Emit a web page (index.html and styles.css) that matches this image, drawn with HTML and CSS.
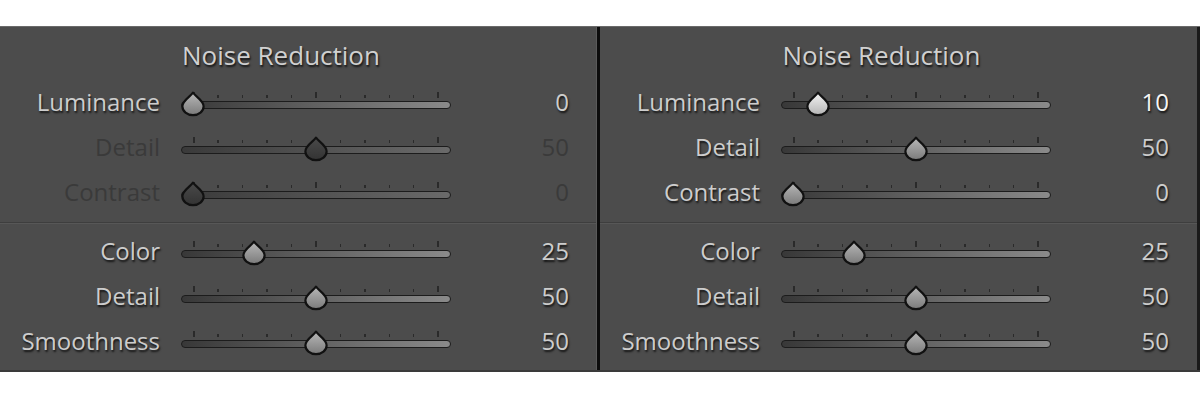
FILE: index.html
```html
<!DOCTYPE html>
<html>
    <head>
        <meta charset="UTF-8">
        <title>Noise Reduction</title>
        <link rel="stylesheet" href="styles.css">
    </head>
    <body>
        <!-- shared thumb shape and fills -->
        <svg class="defs" width="0" height="0">
            <defs>
                <linearGradient id="fillNormal" x1="0" y1="0" x2="0" y2="1">
                    <stop offset="0" stop-color="#b8b8b8"/>
                    <stop offset="1" stop-color="#7a7a7a"/>
                </linearGradient>
                <linearGradient id="fillBright" x1="0" y1="0" x2="0" y2="1">
                    <stop offset="0" stop-color="#f4f4f4"/>
                    <stop offset="1" stop-color="#b4b4b4"/>
                </linearGradient>
                <linearGradient id="fillDim" x1="0" y1="0" x2="0" y2="1">
                    <stop offset="0" stop-color="#4a4a4a"/>
                    <stop offset="1" stop-color="#333333"/>
                </linearGradient>
                <symbol id="drop" viewBox="0 0 26 26">
                    <path d="M13 1.6 C14.8 5 23.6 9.4 23.6 15.4 A10.6 8.8 0 0 1 2.4 15.4 C2.4 9.4 11.2 5 13 1.6 Z"
                          stroke="#111" stroke-width="2.2" stroke-linejoin="round"/>
                </symbol>
            </defs>
        </svg>

        <div class="panels">
            <!-- before -->
            <section class="panel">
                <h2 class="title">Noise Reduction</h2>
                <div class="group">
                    <div class="row">
                        <span class="label">Luminance</span>
                        <div class="slider" style="--v: 0">
                            <div class="ticks"><i class="long"></i><i></i><i></i><i></i><i></i><i class="long"></i><i></i><i></i><i></i><i></i><i class="long"></i></div>
                            <div class="track"></div>
                            <svg class="thumb"><use href="#drop"/></svg>
                        </div>
                        <span class="value">0</span>
                    </div>
                    <div class="row off">
                        <span class="label">Detail</span>
                        <div class="slider" style="--v: 50">
                            <div class="ticks"><i class="long"></i><i></i><i></i><i></i><i></i><i class="long"></i><i></i><i></i><i></i><i></i><i class="long"></i></div>
                            <div class="track"></div>
                            <svg class="thumb"><use href="#drop"/></svg>
                        </div>
                        <span class="value">50</span>
                    </div>
                    <div class="row off">
                        <span class="label">Contrast</span>
                        <div class="slider" style="--v: 0">
                            <div class="ticks"><i class="long"></i><i></i><i></i><i></i><i></i><i class="long"></i><i></i><i></i><i></i><i></i><i class="long"></i></div>
                            <div class="track"></div>
                            <svg class="thumb"><use href="#drop"/></svg>
                        </div>
                        <span class="value">0</span>
                    </div>
                </div>
                <div class="group">
                    <div class="row">
                        <span class="label">Color</span>
                        <div class="slider" style="--v: 25">
                            <div class="ticks"><i class="long"></i><i></i><i></i><i></i><i></i><i class="long"></i><i></i><i></i><i></i><i></i><i class="long"></i></div>
                            <div class="track"></div>
                            <svg class="thumb"><use href="#drop"/></svg>
                        </div>
                        <span class="value">25</span>
                    </div>
                    <div class="row">
                        <span class="label">Detail</span>
                        <div class="slider" style="--v: 50">
                            <div class="ticks"><i class="long"></i><i></i><i></i><i></i><i></i><i class="long"></i><i></i><i></i><i></i><i></i><i class="long"></i></div>
                            <div class="track"></div>
                            <svg class="thumb"><use href="#drop"/></svg>
                        </div>
                        <span class="value">50</span>
                    </div>
                    <div class="row">
                        <span class="label">Smoothness</span>
                        <div class="slider" style="--v: 50">
                            <div class="ticks"><i class="long"></i><i></i><i></i><i></i><i></i><i class="long"></i><i></i><i></i><i></i><i></i><i class="long"></i></div>
                            <div class="track"></div>
                            <svg class="thumb"><use href="#drop"/></svg>
                        </div>
                        <span class="value">50</span>
                    </div>
                </div>
            </section>

            <div class="divider"></div>

            <!-- after -->
            <section class="panel">
                <h2 class="title">Noise Reduction</h2>
                <div class="group">
                    <div class="row active">
                        <span class="label">Luminance</span>
                        <div class="slider" style="--v: 10">
                            <div class="ticks"><i class="long"></i><i></i><i></i><i></i><i></i><i class="long"></i><i></i><i></i><i></i><i></i><i class="long"></i></div>
                            <div class="track"></div>
                            <svg class="thumb"><use href="#drop"/></svg>
                        </div>
                        <span class="value">10</span>
                    </div>
                    <div class="row">
                        <span class="label">Detail</span>
                        <div class="slider" style="--v: 50">
                            <div class="ticks"><i class="long"></i><i></i><i></i><i></i><i></i><i class="long"></i><i></i><i></i><i></i><i></i><i class="long"></i></div>
                            <div class="track"></div>
                            <svg class="thumb"><use href="#drop"/></svg>
                        </div>
                        <span class="value">50</span>
                    </div>
                    <div class="row">
                        <span class="label">Contrast</span>
                        <div class="slider" style="--v: 0">
                            <div class="ticks"><i class="long"></i><i></i><i></i><i></i><i></i><i class="long"></i><i></i><i></i><i></i><i></i><i class="long"></i></div>
                            <div class="track"></div>
                            <svg class="thumb"><use href="#drop"/></svg>
                        </div>
                        <span class="value">0</span>
                    </div>
                </div>
                <div class="group">
                    <div class="row">
                        <span class="label">Color</span>
                        <div class="slider" style="--v: 25">
                            <div class="ticks"><i class="long"></i><i></i><i></i><i></i><i></i><i class="long"></i><i></i><i></i><i></i><i></i><i class="long"></i></div>
                            <div class="track"></div>
                            <svg class="thumb"><use href="#drop"/></svg>
                        </div>
                        <span class="value">25</span>
                    </div>
                    <div class="row">
                        <span class="label">Detail</span>
                        <div class="slider" style="--v: 50">
                            <div class="ticks"><i class="long"></i><i></i><i></i><i></i><i></i><i class="long"></i><i></i><i></i><i></i><i></i><i class="long"></i></div>
                            <div class="track"></div>
                            <svg class="thumb"><use href="#drop"/></svg>
                        </div>
                        <span class="value">50</span>
                    </div>
                    <div class="row">
                        <span class="label">Smoothness</span>
                        <div class="slider" style="--v: 50">
                            <div class="ticks"><i class="long"></i><i></i><i></i><i></i><i></i><i class="long"></i><i></i><i></i><i></i><i></i><i class="long"></i></div>
                            <div class="track"></div>
                            <svg class="thumb"><use href="#drop"/></svg>
                        </div>
                        <span class="value">50</span>
                    </div>
                </div>
            </section>
        </div>
    </body>
</html>
```

FILE: styles.css
```css
html {
    width: 100%;
    height: 100%;
}

body {
    margin: 0;
    background: #ffffff;
    font-family: "Open Sans", "Noto Sans", sans-serif;
}

.defs {
    position: absolute;
    width: 0;
    height: 0;
}

.panels {
    margin-top: 26px;
    display: flex;
    height: 346px;
    border-top: 1px solid #6a6a6a;
    border-bottom: 2px solid #3a3a3a;
    box-sizing: border-box;
    background: #4c4c4c;
}

.panel {
    width: 596px;
    display: flex;
    flex-direction: column;
}

.panel:first-child {
    border-right: 1px solid #5a5a5a;
}

.panel:last-child {
    width: 597px;
    border-right: 3px solid #1a1a1a;
}

.divider {
    width: 3px;
    background: #0c0c0c;
}

.title {
    margin: 0;
    height: 50px;
    padding-top: 3px;
    padding-right: 34px;
    line-height: 50px;
    text-align: center;
    font-size: 26px;
    font-weight: normal;
    color: #d0d0d0;
    text-shadow: 1px 2px 2px rgba(0, 0, 0, 0.75);
}

.group {
    padding: 0 0 7px;
}

.group + .group {
    border-top: 1px solid #3e3e3e;
    box-shadow: inset 0 1px 0 #575757;
    padding: 6px 0 5px;
}

.row {
    display: grid;
    grid-template-columns: 160px 270px 97px;
    column-gap: 21px;
    align-items: center;
    height: 45px;
    font-size: 24px;
    color: #cdcdcd;
    text-shadow: 1px 2px 2px rgba(0, 0, 0, 0.75);
}

.label,
.value {
    text-align: right;
    line-height: 43px;
    padding-bottom: 2px;
}

.row.off {
    color: #3a3a3a;
    text-shadow: none;
}

.row.active .value {
    color: #f6f6f6;
}

/* slider: tick row above a pill track, thumb laid over both */
.slider {
    position: relative;
    display: flex;
    flex-direction: column;
    gap: 3px;
    margin-bottom: 4px;
}

.ticks {
    display: flex;
    justify-content: space-between;
    align-items: flex-end;
    height: 6px;
    margin-left: 12px;
    width: 246px;
}

.ticks i {
    display: block;
    width: 1.5px;
    height: 3px;
    background: #2a2a2a;
}

.ticks i.long {
    height: 6px;
}

.track {
    height: 8px;
    box-sizing: border-box;
    border: 1.5px solid #1c1c1c;
    border-radius: 4px;
    background: linear-gradient(to right, #383838, #8a8a8a);
}

.row.off .track {
    background: linear-gradient(to right, #3a3a3a, #6a6a6a);
}

.thumb {
    position: absolute;
    top: -1px;
    left: calc(var(--v) * 2.45px - 1px);
    width: 26px;
    height: 26px;
    fill: url(#fillNormal);
}

.row.off .thumb {
    fill: url(#fillDim);
}

.row.active .thumb {
    fill: url(#fillBright);
}
```
